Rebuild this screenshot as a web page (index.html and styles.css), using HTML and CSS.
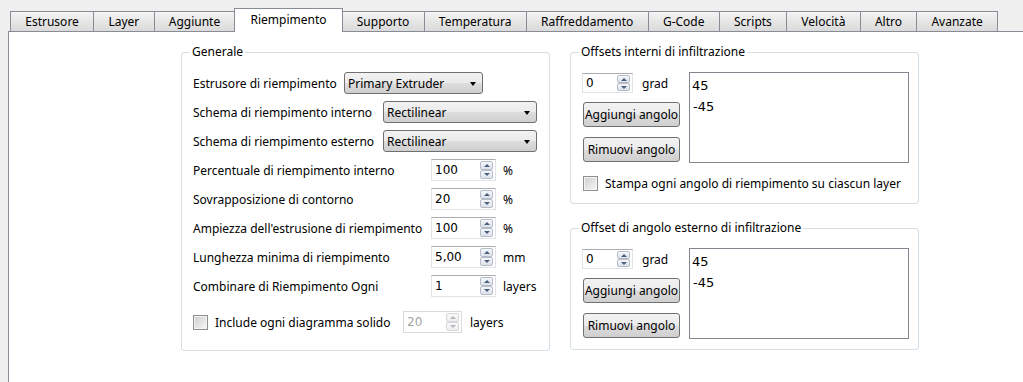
FILE: index.html
```html
<!DOCTYPE html>
<html lang="it">
<head>
    <meta charset="UTF-8">
    <title>Riempimento</title>
    <link rel="stylesheet" href="styles.css">
</head>
<body>
    <div class="tabs">
        <div class="tab">Estrusore</div>
        <div class="tab">Layer</div>
        <div class="tab">Aggiunte</div>
        <div class="tab active">Riempimento</div>
        <div class="tab">Supporto</div>
        <div class="tab">Temperatura</div>
        <div class="tab">Raffreddamento</div>
        <div class="tab">G-Code</div>
        <div class="tab">Scripts</div>
        <div class="tab">Velocità</div>
        <div class="tab">Altro</div>
        <div class="tab">Avanzate</div>
    </div>

    <div class="pane">
        <fieldset class="group general">
            <legend>Generale</legend>
            <div class="rows">
                <div class="row">
                    <span class="label lbl-extruder">Estrusore di riempimento</span>
                    <div class="combo combo-short"><span>Primary Extruder</span></div>
                </div>
                <div class="row">
                    <span class="label lbl-pattern">Schema di riempimento interno</span>
                    <div class="combo combo-long"><span>Rectilinear</span></div>
                </div>
                <div class="row">
                    <span class="label lbl-pattern">Schema di riempimento esterno</span>
                    <div class="combo combo-long"><span>Rectilinear</span></div>
                </div>
                <div class="row">
                    <span class="label lbl-value">Percentuale di riempimento interno</span>
                    <div class="spin"><span class="spin-value">100</span><span class="spin-arrows"><i class="up"></i><i class="down"></i></span></div>
                    <span class="unit">%</span>
                </div>
                <div class="row">
                    <span class="label lbl-value">Sovrapposizione di contorno</span>
                    <div class="spin"><span class="spin-value">20</span><span class="spin-arrows"><i class="up"></i><i class="down"></i></span></div>
                    <span class="unit">%</span>
                </div>
                <div class="row">
                    <span class="label lbl-value">Ampiezza dell'estrusione di riempimento</span>
                    <div class="spin"><span class="spin-value">100</span><span class="spin-arrows"><i class="up"></i><i class="down"></i></span></div>
                    <span class="unit">%</span>
                </div>
                <div class="row">
                    <span class="label lbl-value">Lunghezza minima di riempimento</span>
                    <div class="spin"><span class="spin-value">5,00</span><span class="spin-arrows"><i class="up"></i><i class="down"></i></span></div>
                    <span class="unit">mm</span>
                </div>
                <div class="row">
                    <span class="label lbl-value">Combinare di Riempimento Ogni</span>
                    <div class="spin"><span class="spin-value">1</span><span class="spin-arrows"><i class="up"></i><i class="down"></i></span></div>
                    <span class="unit">layers</span>
                </div>
                <div class="row check-row">
                    <span class="check"></span>
                    <span class="label lbl-solid">Include ogni diagramma solido</span>
                    <div class="spin spin-solid disabled"><span class="spin-value">20</span><span class="spin-arrows"><i class="up"></i><i class="down"></i></span></div>
                    <span class="unit unit-solid">layers</span>
                </div>
            </div>
        </fieldset>

        <div class="side">
            <fieldset class="group offsets first">
                <legend>Offsets interni di infiltrazione</legend>
                <div class="offset-body">
                    <div class="offset-controls">
                        <div class="spin-line">
                            <div class="spin spin-small"><span class="spin-value">0</span><span class="spin-arrows"><i class="up"></i><i class="down"></i></span></div>
                            <span>grad</span>
                        </div>
                        <div class="btn btn-add">Aggiungi angolo</div>
                        <div class="btn btn-remove">Rimuovi angolo</div>
                    </div>
                    <div class="list">
                        <div class="item">45</div>
                        <div class="item">-45</div>
                    </div>
                </div>
                <div class="check-line">
                    <span class="check"></span>
                    <span>Stampa ogni angolo di riempimento su ciascun layer</span>
                </div>
            </fieldset>

            <fieldset class="group offsets second">
                <legend>Offset di angolo esterno di infiltrazione</legend>
                <div class="offset-body">
                    <div class="offset-controls">
                        <div class="spin-line">
                            <div class="spin spin-small"><span class="spin-value">0</span><span class="spin-arrows"><i class="up"></i><i class="down"></i></span></div>
                            <span>grad</span>
                        </div>
                        <div class="btn btn-add">Aggiungi angolo</div>
                        <div class="btn btn-remove">Rimuovi angolo</div>
                    </div>
                    <div class="list">
                        <div class="item">45</div>
                        <div class="item">-45</div>
                    </div>
                </div>
            </fieldset>
        </div>
    </div>
</body>
</html>
```

FILE: styles.css
```css
body {
    margin: 0;
    height: 382px;
    overflow: hidden;
    background: #f0f0f0;
    color: #000;
    font-family: "Noto Sans", sans-serif;
    font-size: 12px;
}

/* tab strip */
.tabs {
    display: flex;
    align-items: flex-end;
    box-sizing: border-box;
    height: 31px;
    padding: 8px 0 0 10px;
}
.tab {
    height: 20px;
    box-sizing: border-box;
    padding: 0 14.25px;
    margin-left: -1px;
    border: 1px solid #898c95;
    border-bottom: 0;
    background: linear-gradient(#f4f4f4, #e6e6e6 50%, #dadada);
    line-height: 19px;
    white-space: nowrap;
}
.tab:first-child { margin-left: 0; }
.tab.active {
    position: relative;
    z-index: 1;
    height: 24px;
    margin-bottom: -1px;
    padding: 0 15px;
    background: #fff;
    line-height: 21px;
}

.pane {
    display: flex;
    align-items: flex-start;
    gap: 20px;
    box-sizing: border-box;
    height: 351px;
    margin-left: 8px;
    padding: 12px 0 0 172px;
    border-top: 1px solid #898c95;
    border-left: 1px solid #898c95;
    background: #fff;
}

/* group boxes */
.group {
    margin: 0;
    min-width: 0;
    box-sizing: border-box;
    padding: 12px 11px 17px;
    border: 1px solid #d5dfe5;
    border-radius: 3px;
}
.group legend {
    margin-left: -3px;
    padding: 0 2px;
    line-height: 16px;
}
.general { width: 369px; }

.rows {
    display: flex;
    flex-direction: column;
    gap: 7px;
}
.row {
    display: flex;
    align-items: center;
    height: 22px;
}
.row.check-row { margin-top: 7px; }
.label { flex: none; white-space: nowrap; }
.lbl-extruder { width: 151px; }
.lbl-pattern { width: 190px; }
.lbl-value { width: 238px; }
.lbl-solid { width: 188px; margin-left: 7px; }
.unit { margin-left: 7px; }
.unit-solid { margin-left: 8px; }

/* combo boxes */
.combo {
    display: flex;
    align-items: center;
    box-sizing: border-box;
    height: 22px;
    padding-left: 3px;
    border: 1px solid #707070;
    border-radius: 3px;
    background: linear-gradient(#f2f2f2, #ebebeb 48%, #dddddd 52%, #cfcfcf);
}
.combo::after {
    content: "";
    margin: 1px 6px 0 auto;
    border-top: 4px solid #000;
    border-left: 3.5px solid transparent;
    border-right: 3.5px solid transparent;
}
.combo-short { width: 139px; }
.combo-long { width: 154px; }

/* spin boxes */
.spin {
    display: flex;
    box-sizing: border-box;
    width: 65px;
    height: 22px;
    border: 1px solid #e2e3ea;
    border-top-color: #abadb3;
    background: #fff;
    font-family: "DejaVu Sans", sans-serif;
    font-size: 12px;
}
.spin-value {
    flex: 1;
    padding-left: 3px;
    line-height: 20px;
}
.spin-arrows {
    display: flex;
    flex-direction: column;
    width: 13px;
    margin: 1px 2px 1px 0;
}
.spin-arrows i {
    flex: 1;
    display: flex;
    align-items: center;
    justify-content: center;
    border: 1px solid #b5bcc7;
    border-radius: 2px;
    background: linear-gradient(#f5f7fa, #dde2ea);
}
.spin-arrows i::before {
    content: "";
    border-left: 3px solid transparent;
    border-right: 3px solid transparent;
}
.spin-arrows .up::before { border-bottom: 3px solid #4a5f80; }
.spin-arrows .down::before { border-top: 3px solid #4a5f80; }

.spin-solid { width: 59px; }
.spin.disabled {
    border-color: #d9d9d9;
    color: #a3a3a3;
}
.spin.disabled .spin-arrows i {
    border-color: #d4d7dc;
    background: linear-gradient(#fafafa, #eeeeee);
}
.spin.disabled .up::before { border-bottom-color: #b5b5b5; }
.spin.disabled .down::before { border-top-color: #b5b5b5; }

.spin-small { width: 51px; height: 20px; }
.spin-small .spin-value { line-height: 18px; }

/* check boxes */
.check {
    flex: none;
    width: 13px;
    height: 13px;
    border: 1px solid #8e8f8f;
    background: linear-gradient(135deg, #cdcdcd, #f7f7f7);
    box-shadow: inset 0 0 0 1px #f4f4f4;
}

/* angle offsets */
.side {
    display: flex;
    flex-direction: column;
    width: 349px;
}
.offsets { padding: 12px 9px 12px 11px; }
.offsets.second { margin-top: 16px; padding-bottom: 10px; }

.offset-body {
    display: flex;
    gap: 9px;
}
.offset-controls {
    display: flex;
    flex-direction: column;
    width: 98px;
}
.spin-line {
    display: flex;
    align-items: center;
    gap: 9px;
    margin-top: 1px;
}
.btn {
    box-sizing: border-box;
    width: 97px;
    height: 25px;
    margin-left: 1px;
    border: 1px solid #707070;
    border-radius: 3px;
    background: linear-gradient(#f2f2f2, #ebebeb 48%, #dddddd 52%, #cfcfcf);
    line-height: 23px;
    text-align: center;
    white-space: nowrap;
}
.btn-add { margin-top: 9px; }
.btn-remove { margin-top: 10px; }

.list {
    flex: 1;
    box-sizing: border-box;
    height: 91px;
    padding: 2px 2px;
    border: 1px solid #828790;
    font-family: "DejaVu Sans", sans-serif;
    font-size: 13px;
    line-height: 21px;
}
.list .item:nth-child(2) { padding-left: 1px; }

.check-line {
    display: flex;
    align-items: center;
    gap: 7px;
    height: 16px;
    margin: 12px 0 0 1px;
}
```
